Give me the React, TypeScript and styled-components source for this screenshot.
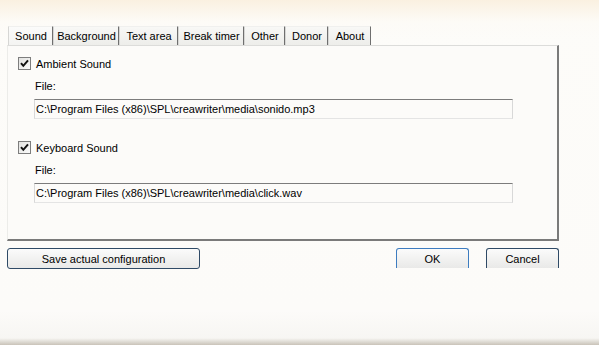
import React from "react";
import styled, { createGlobalStyle } from "styled-components";

const Global = createGlobalStyle`
  html, body { margin: 0; padding: 0; }
  body {
    width: 599px; height: 345px; overflow: hidden;
    font-family: "Liberation Sans", Arial, sans-serif;
    font-size: 11px; color: #000;
  }
`;

const Window = styled.div`
  width: 599px;
  height: 345px;
  box-sizing: border-box;
  padding: 26px 0 0 7px;
  background:
    linear-gradient(180deg, rgba(248, 232, 208, 0.6) 0px, rgba(253, 248, 240, 0.25) 22px, rgba(255,255,255,0) 40px),
    linear-gradient(180deg, #fdfcf9 0%, #fcfbf9 90%, #f7f6f3 98%, #c9c3b8 100%);
  display: flex;
  flex-direction: column;
`;

const TabBar = styled.div`
  display: flex;
  height: 19px;
  padding-left: 1px;
`;

const Tab = styled.div<{ $w: number; $active?: boolean }>`
  display: flex;
  align-items: center;
  justify-content: center;
  box-sizing: border-box;
  width: ${p => p.$w}px;
  height: 19px;
  padding-left: 1px;
  background: ${p =>
    p.$active
      ? "linear-gradient(180deg, #fbfbfa 0%, #f4f4f2 100%)"
      : "linear-gradient(180deg, #f8f8f6 0%, #ededea 100%)"};
  border-top: 1px solid #f0f0ee;
  border-left: 1px solid #d6d6d4;
  border-right: 1px solid #6f6f6f;
  white-space: nowrap;
`;

const Panel = styled.div`
  width: 552px;
  height: 196px;
  box-sizing: border-box;
  border-top: 1px solid #dcdcda;
  border-left: 1px solid #ecece9;
  border-right: 2px solid #7a7a7a;
  border-bottom: 2px solid #7a7a7a;
  background: #fcfbf9;
  padding: 11px 0 0 10px;
  display: flex;
  flex-direction: column;
`;

const Group = styled.div`
  display: flex;
  flex-direction: column;
  margin-bottom: 22px;
`;

const CheckRow = styled.label`
  display: flex;
  align-items: center;
  gap: 5px;
  height: 13px;
`;

const Box = styled.span`
  width: 13px;
  height: 13px;
  box-sizing: border-box;
  border: 1px solid #7d7d7d;
  background: linear-gradient(135deg, #e2e2e0 0%, #fafafa 100%);
  display: inline-flex;
  align-items: center;
  justify-content: center;
`;

const FileLabel = styled.div`
  margin: 10px 0 0 17px;
  height: 13px;
  line-height: 13px;
`;

const Field = styled.div`
  margin: 6px 0 0 16px;
  width: 479px;
  height: 20px;
  box-sizing: border-box;
  border-top: 1px solid #7c7c7c;
  border-left: 1px solid #d8d8d8;
  border-right: 1px solid #d8d8d8;
  border-bottom: 1px solid #e4e4e4;
  background: #fcfbf9;
  padding-left: 1px;
  display: flex;
  align-items: center;
  white-space: nowrap;
`;

const ButtonRow = styled.div`
  display: flex;
  margin-top: 7px;
  width: 552px;
  align-items: flex-start;
  gap: 17px;
`;

const Button = styled.div<{ $w: number; $open?: boolean; $focus?: boolean }>`
  width: ${p => p.$w}px;
  height: ${p => (p.$open ? 20 : 21)}px;
  box-sizing: border-box;
  border: 1px solid ${p => (p.$focus ? "#3d7cc0" : "#2f4a66")};
  border-bottom: ${p => (p.$open ? "none" : `1px solid #2f4a66`)};
  border-radius: ${p => (p.$open ? "3px 3px 0 0" : "3px")};
  background: linear-gradient(180deg, #fbfbfb 0%, #f2f2f1 50%, #e9e9e8 100%);
  display: flex;
  align-items: center;
  justify-content: center;
  padding-top: ${p => (p.$open ? 1 : 0)}px;
`;

const Spacer = styled.div`
  flex: 1;
`;

const Check = () => (
  <Box>
    <svg width="9" height="9" viewBox="0 0 9 9">
      <path d="M1 4.2 L3.3 6.8 L8 1.4" fill="none" stroke="#111" strokeWidth="2" />
    </svg>
  </Box>
);

const tabs: [string, number][] = [
  ["Sound", 45],
  ["Background", 66],
  ["Text area", 59],
  ["Break timer", 66],
  ["Other", 41],
  ["Donor", 43],
  ["About", 43],
];

const sounds = [
  { label: "Ambient Sound", path: "C:\\Program Files (x86)\\SPL\\creawriter\\media\\sonido.mp3" },
  { label: "Keyboard Sound", path: "C:\\Program Files (x86)\\SPL\\creawriter\\media\\click.wav" },
];

export default function App() {
  return (
    <>
      <Global />
      <Window>
        <TabBar>
          {tabs.map(([t, w], i) => (
            <Tab key={t} $w={w} $active={i === 0}>{t}</Tab>
          ))}
        </TabBar>
        <Panel>
          {sounds.map(s => (
            <Group key={s.label}>
              <CheckRow>
                <Check />
                <span>{s.label}</span>
              </CheckRow>
              <FileLabel>File:</FileLabel>
              <Field>{s.path}</Field>
            </Group>
          ))}
        </Panel>
        <ButtonRow>
          <Button $w={193}>Save actual configuration</Button>
          <Spacer />
          <Button $w={73} $open $focus>OK</Button>
          <Button $w={73} $open>Cancel</Button>
        </ButtonRow>
      </Window>
    </>
  );
}
